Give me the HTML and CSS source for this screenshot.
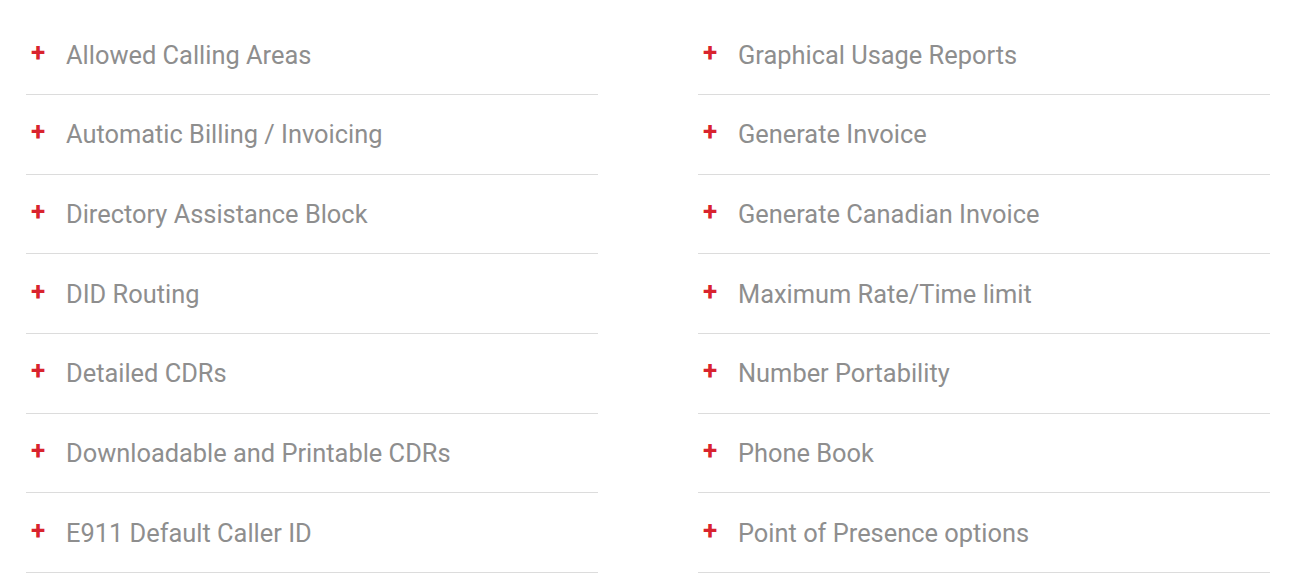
FILE: index.html
```html
<!DOCTYPE html>
<html lang="en">
<head>
    <meta charset="UTF-8">
    <meta name="viewport" content="width=device-width, initial-scale=1.0">
    <title>Features</title>
    <link rel="stylesheet" href="styles.css">
</head>
<body>
    <div class="features">
        <ul class="feature-list">
            <li class="feature-item"><span class="plus">+</span>Allowed Calling Areas</li>
            <li class="feature-item"><span class="plus">+</span>Automatic Billing / Invoicing</li>
            <li class="feature-item"><span class="plus">+</span>Directory Assistance Block</li>
            <li class="feature-item"><span class="plus">+</span>DID Routing</li>
            <li class="feature-item"><span class="plus">+</span>Detailed CDRs</li>
            <li class="feature-item"><span class="plus">+</span>Downloadable and Printable CDRs</li>
            <li class="feature-item"><span class="plus">+</span>E911 Default Caller ID</li>
        </ul>
        <ul class="feature-list">
            <li class="feature-item"><span class="plus">+</span>Graphical Usage Reports</li>
            <li class="feature-item"><span class="plus">+</span>Generate Invoice</li>
            <li class="feature-item"><span class="plus">+</span>Generate Canadian Invoice</li>
            <li class="feature-item"><span class="plus">+</span>Maximum Rate/Time limit</li>
            <li class="feature-item"><span class="plus">+</span>Number Portability</li>
            <li class="feature-item"><span class="plus">+</span>Phone Book</li>
            <li class="feature-item"><span class="plus">+</span>Point of Presence options</li>
        </ul>
    </div>
</body>
</html>
```

FILE: styles.css
```css
body {
    margin: 0;
    background: #fff;
    font-family: Roboto, 'Liberation Sans', sans-serif;
}

.features {
    display: grid;
    grid-template-columns: 572px 572px;
    column-gap: 100px;
    padding: 15.33px 0 0 26px;
}

.feature-list {
    list-style: none;
    margin: 0;
    padding: 0;
}

.feature-item {
    display: flex;
    align-items: center;
    height: 78.67px;
    border-bottom: 1px solid #dcdcdc;
    font-size: 25.4px;
    color: #8e8e8e;
}

.plus {
    flex: none;
    width: 35px;
    padding-left: 5px;
    margin-top: -6px;
    color: #d9232e;
    font-size: 26px;
    font-weight: 700;
}
```
